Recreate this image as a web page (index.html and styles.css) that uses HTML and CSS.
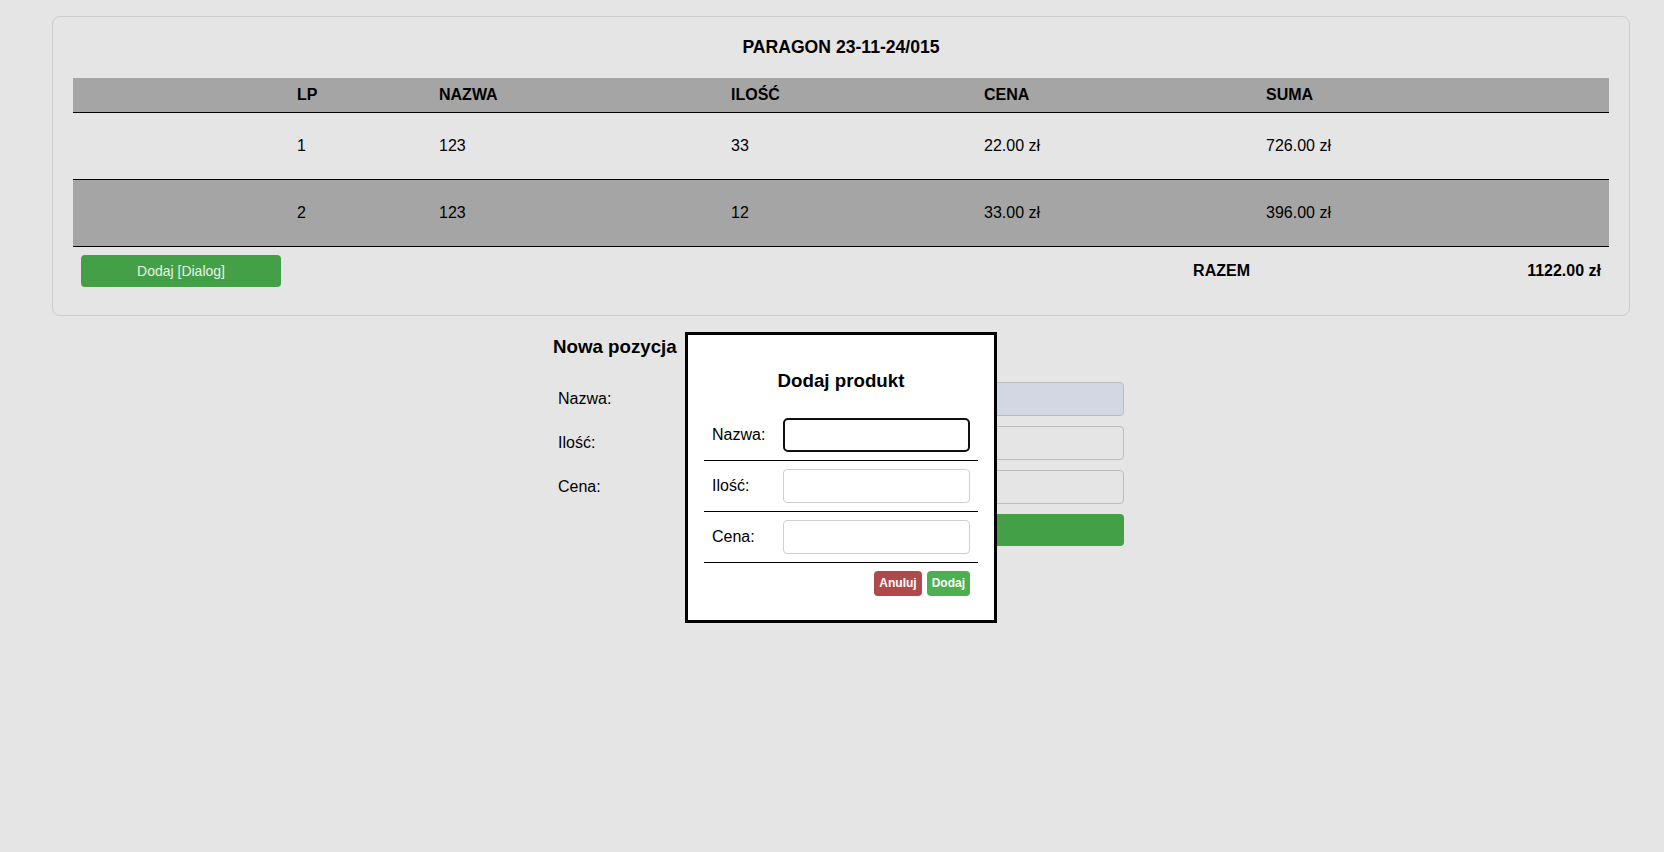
FILE: index.html
```html
<!DOCTYPE html>
<html lang="pl">
<head>
<meta charset="utf-8">
<title>Paragon</title>
<link rel="stylesheet" href="styles.css">
</head>
<body>
<div class="page">
  <div class="card">
    <div class="card-title">PARAGON 23-11-24/015</div>
    <table class="receipt">
      <colgroup>
        <col class="c1"><col class="c2"><col class="c3"><col class="c4"><col class="c5"><col class="c6">
      </colgroup>
      <thead>
        <tr><th></th><th>LP</th><th>NAZWA</th><th>ILOŚĆ</th><th>CENA</th><th>SUMA</th></tr>
      </thead>
      <tbody>
        <tr><td></td><td>1</td><td>123</td><td>33</td><td>22.00 zł</td><td>726.00 zł</td></tr>
        <tr class="alt"><td></td><td>2</td><td>123</td><td>12</td><td>33.00 zł</td><td>396.00 zł</td></tr>
      </tbody>
      <tfoot>
        <tr>
          <td><button class="btn-green btn-dialog">Dodaj [Dialog]</button></td>
          <td colspan="3"></td>
          <td class="right bold">RAZEM</td>
          <td class="right bold">1122.00 zł</td>
        </tr>
      </tfoot>
    </table>
  </div>

  <div class="new-item">
    <h3 class="new-title">Nowa pozycja</h3>
    <div class="form-grid">
      <label class="flabel">Nazwa:</label>
      <input class="finput autofill" type="text">
      <label class="flabel">Ilość:</label>
      <input class="finput" type="text">
      <label class="flabel">Cena:</label>
      <input class="finput" type="text">
      <button class="btn-green fbutton">Dodaj</button>
    </div>
  </div>

  <div class="dialog">
    <h3 class="dialog-title">Dodaj produkt</h3>
    <div class="drow"><span class="dlabel">Nazwa:</span><span class="dcell"><input class="dinput focused" type="text"></span></div>
    <div class="drow"><span class="dlabel">Ilość:</span><span class="dcell"><input class="dinput" type="text"></span></div>
    <div class="drow"><span class="dlabel">Cena:</span><span class="dcell"><input class="dinput" type="text"></span></div>
    <div class="dactions">
      <button class="dbtn cancel">Anuluj</button>
      <button class="dbtn ok">Dodaj</button>
    </div>
  </div>
</div>
</body>
</html>
```

FILE: styles.css
```css
html, body {
  margin: 0;
  padding: 0;
  background: #e5e5e5;
  font-family: "Liberation Sans", Arial, sans-serif;
  font-size: 16px;
  color: #000;
}

.page {
  position: relative;
  padding-top: 16px;
  min-height: 852px;
  box-sizing: border-box;
}

.card {
  margin: 0 34px 0 52px;
  border: 1px solid #cdcdcd;
  border-radius: 8px;
  padding: 20px;
}

.card-title {
  text-align: center;
  font-weight: bold;
  font-size: 17.6px;
  line-height: 20px;
  margin-bottom: 21px;
}

.receipt {
  width: 100%;
  border-collapse: separate;
  border-spacing: 0;
  table-layout: fixed;
}

.c1 { width: 216px; }
.c2 { width: 142px; }
.c3 { width: 292px; }
.c4 { width: 253px; }
.c5 { width: 282px; }
.c6 { width: 351px; }

.receipt th,
.receipt td {
  text-align: left;
  padding: 8px;
  line-height: 18px;
  font-size: 16px;
}

.receipt thead th {
  background: #a5a5a5;
  border-bottom: 1px solid #000;
}

.receipt tbody td {
  padding: 24px 8px;
  border-bottom: 1px solid #000;
}

.receipt tbody tr.alt td {
  background: #a5a5a5;
}

.receipt td.right { text-align: right; }
.receipt td.bold { font-weight: bold; }

.btn-green {
  background: #43a047;
  border: none;
  border-radius: 4px;
  color: #e8f3e8;
  font-family: "Liberation Sans", Arial, sans-serif;
}

.btn-dialog {
  display: block;
  width: 100%;
  height: 32px;
  font-size: 14px;
  padding: 0;
}

.new-item {
  width: 571px;
  margin-left: 553px;
}

.new-title {
  font-size: 18.72px;
  font-weight: bold;
  margin: 20px 0 24px;
  line-height: 21.5px;
}

.form-grid {
  display: grid;
  grid-template-columns: 150px 1fr;
  row-gap: 10px;
  align-items: center;
}

.flabel {
  padding-left: 5px;
  font-size: 16px;
}

.finput {
  height: 34px;
  box-sizing: border-box;
  border: 1px solid #bcbcbc;
  border-radius: 4px;
  background: transparent;
  width: 100%;
}

.finput.autofill {
  background: #d1d8e4;
}

.fbutton {
  grid-column: 2;
  height: 32px;
  width: 100%;
}

.dialog {
  position: absolute;
  top: 332px;
  left: 685px;
  width: 312px;
  box-sizing: border-box;
  border: 3px solid #000;
  padding: 16px;
  background: #fff;
}

.dialog-title {
  text-align: center;
  font-size: 18.72px;
  font-weight: bold;
  margin: 18.72px 0;
  line-height: 21.5px;
}

.drow {
  display: grid;
  grid-template-columns: 71px 1fr;
  align-items: center;
  border-bottom: 1px solid #000;
}

.dlabel {
  padding: 8px;
  font-size: 16px;
}

.dcell {
  padding: 8px;
  display: block;
}

.dinput {
  display: block;
  width: 100%;
  height: 34px;
  box-sizing: border-box;
  border: 1px solid #cfcfcf;
  border-radius: 4px;
  background: #fff;
}

.dinput.focused {
  border: 2px solid #101010;
  border-radius: 5px;
}

.dactions {
  display: flex;
  justify-content: flex-end;
  gap: 5px;
  padding: 8px;
}

.dbtn {
  height: 25px;
  padding: 0 5px;
  border: none;
  border-radius: 4px;
  color: #fff;
  font-family: "Liberation Sans", Arial, sans-serif;
  font-weight: bold;
  font-size: 12px;
}

.dbtn.cancel { background: #b04a4a; }
.dbtn.ok { background: #4caf50; }
```
